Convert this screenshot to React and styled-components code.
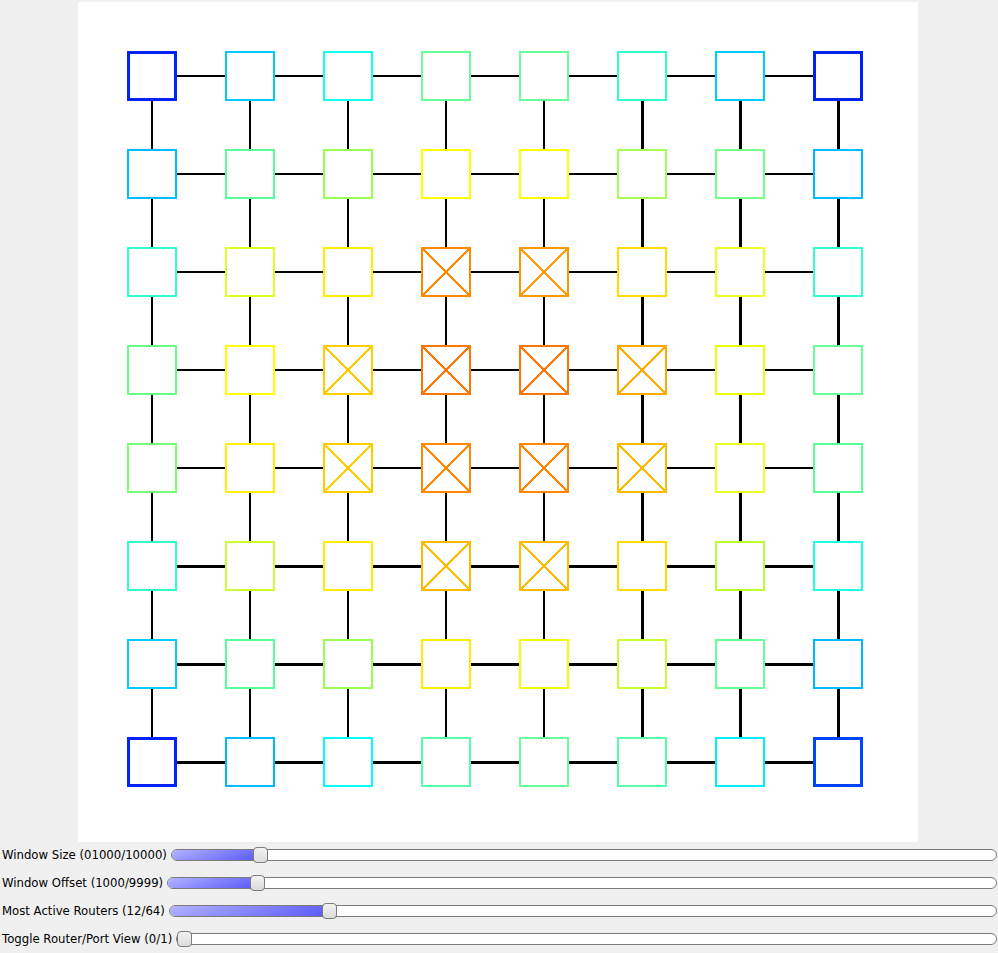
import React from "react";
import styled, { createGlobalStyle } from "styled-components";

const GlobalStyle = createGlobalStyle`
  html, body { margin: 0; padding: 0; background: #f0f0f0; }
  body { font-family: Tahoma, "DejaVu Sans", "Liberation Sans", sans-serif; }
`;

const Page = styled.div`
  display: flex;
  flex-direction: column;
  width: 998px;
  height: 953px;
  padding-top: 2px;
  box-sizing: border-box;
`;

const Canvas = styled.div`
  align-self: flex-start;
  width: 840px;
  height: 840px;
  background: #ffffff;
  margin-left: 78px;
  display: flex;
`;

const Controls = styled.div`
  display: flex;
  flex-direction: column;
  margin-top: -1px;
`;

const Row = styled.div`
  display: flex;
  align-items: center;
  height: 28px;
  padding-left: 2px;
  padding-right: 1px;
  gap: 4px;
`;

const Label = styled.span`
  font-family: "DejaVu Sans", sans-serif;
  font-size: 11.7px;
  color: #000;
  white-space: nowrap;
`;

const Track = styled.div`
  position: relative;
  flex: 1;
  height: 10px;
  border: 1px solid #7a7a7a;
  border-radius: 6px;
  background: #ffffff;
`;

const Fill = styled.div`
  position: absolute;
  left: 0;
  top: 0;
  bottom: 0;
  border-radius: 5px 0 0 5px;
  background: linear-gradient(160deg, #b4b4ff 0%, #8a8aff 45%, #5a5af5 100%);
`;

const Handle = styled.div`
  position: absolute;
  top: -3px;
  width: 13px;
  height: 14px;
  border: 1px solid #7c7c7c;
  border-radius: 4px;
  background: linear-gradient(180deg, #f2f2f2 0%, #dcdcdc 100%);
`;

const COLORS = [
  ["#0022ff", "#00ccff", "#11ffee", "#66ff99", "#66ff99", "#33ffcc", "#00ccff", "#0022ee"],
  ["#00bbff", "#55ff99", "#99ff55", "#ffff00", "#ffff00", "#aaff55", "#77ff88", "#00bbff"],
  ["#33ffcc", "#ddff22", "#ffee00", "#ff8800", "#ff9900", "#ffdd00", "#eeff22", "#33ffcc"],
  ["#66ff88", "#ffff00", "#ffcc00", "#ff7700", "#ff7700", "#ffaa00", "#eeff00", "#66ff99"],
  ["#77ff77", "#ffee00", "#ffcc00", "#ff8800", "#ff8800", "#ffbb00", "#eeff22", "#55ff99"],
  ["#33ffcc", "#ccff33", "#ffee00", "#ffbb00", "#ffbb00", "#ffdd00", "#bbff33", "#22ffdd"],
  ["#00ccff", "#55ff99", "#99ff55", "#ffee00", "#eeff00", "#ccff33", "#66ff99", "#00bbff"],
  ["#0022ff", "#00bbff", "#00ffff", "#55ffaa", "#66ff99", "#55ffaa", "#00eeff", "#0044ff"],
];

const CROSSED = [
  [2, 3], [2, 4],
  [3, 2], [3, 3], [3, 4], [3, 5],
  [4, 2], [4, 3], [4, 4], [4, 5],
  [5, 3], [5, 4],
];

const isCrossed = (r, c) => CROSSED.some(([a, b]) => a === r && b === c);
const isCorner = (r, c) => (r === 0 || r === 7) && (c === 0 || c === 7);

const SP = 98;
const C0 = 74;
const HALF = 25;

function Network() {
  const lines = [];
  for (let r = 0; r < 8; r++) {
    for (let c = 0; c < 8; c++) {
      const cx = C0 + c * SP;
      const cy = C0 + r * SP;
      if (c < 7) {
        const w = r >= 5 ? 3 : 2;
        lines.push(
          <line key={`h${r}${c}`} x1={cx + HALF} y1={cy + (w === 3 ? 0.5 : 0)} x2={cx + SP - HALF} y2={cy + (w === 3 ? 0.5 : 0)} stroke="#000" strokeWidth={w} />
        );
      }
      if (r < 7) {
        const w = c >= 5 ? 3 : 2;
        lines.push(
          <line key={`v${r}${c}`} x1={cx + (w === 3 ? 0.5 : 0)} y1={cy + HALF} x2={cx + (w === 3 ? 0.5 : 0)} y2={cy + SP - HALF} stroke="#000" strokeWidth={w} />
        );
      }
    }
  }
  const nodes = [];
  for (let r = 0; r < 8; r++) {
    for (let c = 0; c < 8; c++) {
      const cx = C0 + c * SP;
      const cy = C0 + r * SP;
      const col = COLORS[r][c];
      const sw = isCorner(r, c) ? 3 : 2;
      const o = sw / 2;
      nodes.push(
        <g key={`n${r}${c}`}>
          <rect x={cx - HALF + o} y={cy - HALF + o} width={2 * HALF - sw} height={2 * HALF - sw} fill="#fff" stroke={col} strokeWidth={sw} />
          {isCrossed(r, c) && (
            <>
              <line x1={cx - HALF + 2} y1={cy - HALF + 2} x2={cx + HALF - 2} y2={cy + HALF - 2} stroke={col} strokeWidth={2} />
              <line x1={cx + HALF - 2} y1={cy - HALF + 2} x2={cx - HALF + 2} y2={cy + HALF - 2} stroke={col} strokeWidth={2} />
            </>
          )}
        </g>
      );
    }
  }
  return (
    <svg width="840" height="840" viewBox="0 0 840 840" shapeRendering="crispEdges">
      {lines}
      {nodes}
    </svg>
  );
}

const SLIDERS = [
  { label: "Window Size (01000/10000)", frac: 1000 / 10000 },
  { label: "Window Offset (1000/9999)", frac: 1000 / 9999 },
  { label: "Most Active Routers (12/64)", frac: 12 / 64 },
  { label: "Toggle Router/Port View (0/1)", frac: 0 },
];

function Slider({ label, frac }) {
  const pct = `calc(${frac} * (100% - 13px))`;
  return (
    <Row>
      <Label>{label}</Label>
      <Track>
        {frac > 0 && <Fill style={{ width: `calc(${pct} + 4px)` }} />}
        <Handle style={{ left: pct }} />
      </Track>
    </Row>
  );
}

export default function App() {
  return (
    <>
      <GlobalStyle />
      <Page>
        <Canvas>
          <Network />
        </Canvas>
        <Controls>
          {SLIDERS.map((s) => (
            <Slider key={s.label} {...s} />
          ))}
        </Controls>
      </Page>
    </>
  );
}
